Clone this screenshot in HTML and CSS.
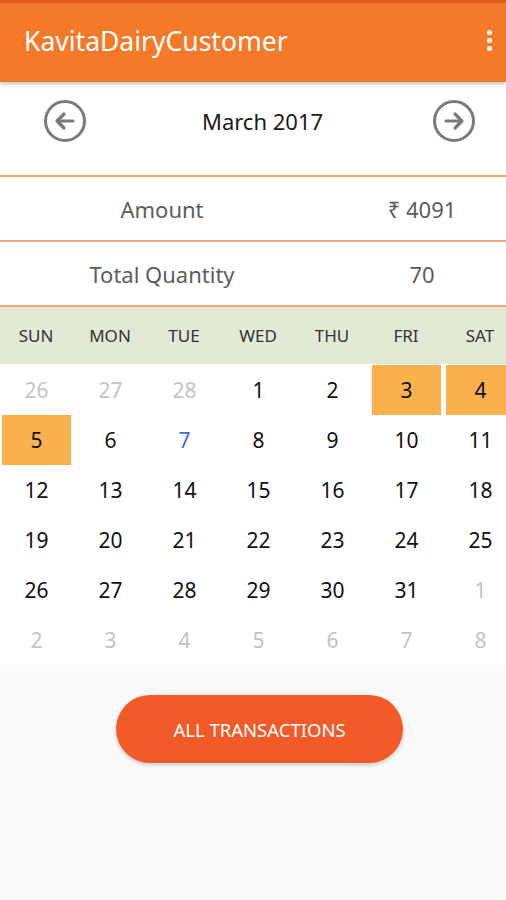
FILE: index.html
```html
<!DOCTYPE html>
<html>
<head>
<meta charset="utf-8">
<link rel="stylesheet" href="styles.css">
</head>
<body>
<div class="screen">
  <div class="status"></div>
  <header class="appbar">
    <div class="apptitle">KavitaDairyCustomer</div>
    <div class="menu"><span></span><span></span><span></span></div>
  </header>
  <div class="monthnav">
    <svg class="navbtn" width="46" height="46" viewBox="0 0 46 46"><circle cx="23" cy="23" r="19.5" fill="none" stroke="#7a7a7a" stroke-width="3"/><path d="M31 23H15M22 16l-7 7 7 7" fill="none" stroke="#7a7a7a" stroke-width="3.2" stroke-linecap="round" stroke-linejoin="round"/></svg>
    <div class="month">March 2017</div>
    <svg class="navbtn" width="46" height="46" viewBox="0 0 46 46"><circle cx="23" cy="23" r="19.5" fill="none" stroke="#7a7a7a" stroke-width="3"/><path d="M15 23h16M24 16l7 7-7 7" fill="none" stroke="#7a7a7a" stroke-width="3.2" stroke-linecap="round" stroke-linejoin="round"/></svg>
  </div>
  <div class="summary">
    <div class="srow"><div class="slabel">Amount</div><div class="svalue">₹ 4091</div></div>
    <div class="srow"><div class="slabel">Total Quantity</div><div class="svalue">70</div></div>
  </div>
  <div class="calendar">
    <div class="weekdays">
      <div>SUN</div><div>MON</div><div>TUE</div><div>WED</div><div>THU</div><div>FRI</div><div>SAT</div>
    </div>
    <div class="days">
      <div class="d other">26</div><div class="d other">27</div><div class="d other">28</div><div class="d">1</div><div class="d">2</div><div class="d hl">3</div><div class="d hl">4</div>
      <div class="d hl">5</div><div class="d">6</div><div class="d today">7</div><div class="d">8</div><div class="d">9</div><div class="d">10</div><div class="d">11</div>
      <div class="d">12</div><div class="d">13</div><div class="d">14</div><div class="d">15</div><div class="d">16</div><div class="d">17</div><div class="d">18</div>
      <div class="d">19</div><div class="d">20</div><div class="d">21</div><div class="d">22</div><div class="d">23</div><div class="d">24</div><div class="d">25</div>
      <div class="d">26</div><div class="d">27</div><div class="d">28</div><div class="d">29</div><div class="d">30</div><div class="d">31</div><div class="d other">1</div>
      <div class="d other">2</div><div class="d other">3</div><div class="d other">4</div><div class="d other">5</div><div class="d other">6</div><div class="d other">7</div><div class="d other">8</div>
    </div>
  </div>
  <div class="bottom">
    <button class="allbtn">ALL TRANSACTIONS</button>
  </div>
</div>
</body>
</html>
```
FILE: styles.css
```css
* {
  box-sizing: border-box;
}
html, body {
  margin: 0;
  padding: 0;
  background: #fafafa;
}
body {
  font-family: "Noto Sans", "DejaVu Sans", sans-serif;
  overflow: hidden;
}
.screen {
  width: 506px;
  height: 900px;
  overflow: hidden;
  display: flex;
  flex-direction: column;
  background: #fafafa;
}
.status {
  height: 3px;
  flex-shrink: 0;
  background: #ea5a22;
}
.appbar {
  height: 79px;
  flex-shrink: 0;
  background: #f47a2a;
  display: flex;
  align-items: center;
  justify-content: space-between;
  padding: 0 14px 0 24px;
  box-shadow: 0 2px 4px rgba(0,0,0,0.25);
  position: relative;
  z-index: 2;
}
.apptitle {
  color: #fff;
  font-size: 26.5px;
  margin-top: -4px;
}
.menu {
  display: flex;
  flex-direction: column;
  gap: 3px;
  margin-top: -4px;
}
.menu span {
  width: 5px;
  height: 5px;
  border-radius: 50%;
  background: #fff;
}
.monthnav {
  height: 93px;
  flex-shrink: 0;
  background: #fff;
  display: flex;
  align-items: center;
  justify-content: space-between;
  padding: 0 29px 15px 42px;
}
.navbtn {
  display: block;
}
.month {
  font-size: 22px;
  color: #1a1a1a;
  margin-left: 6px;
}
.summary {
  background: #fff;
  border-top: 2px solid #f6a47c;
  flex-shrink: 0;
}
.srow {
  height: 65px;
  display: flex;
  align-items: center;
  border-bottom: 2px solid #f6a47c;
  color: #5c5c5c;
  font-size: 22px;
  overflow: hidden;
}
.slabel {
  width: 324px;
  flex-shrink: 0;
  text-align: center;
}
.svalue {
  width: 196px;
  flex-shrink: 0;
  text-align: center;
}
.calendar {
  width: 518px;
  flex-shrink: 0;
  margin-left: -1px;
  background: #fff;
}
.weekdays {
  display: grid;
  grid-template-columns: repeat(7, 74px);
  height: 57px;
  background: #e2e9d5;
  align-items: center;
  font-size: 17px;
  color: #333;
  text-align: center;
}
.days {
  display: grid;
  grid-template-columns: repeat(7, 74px);
  grid-auto-rows: 50px;
  padding-top: 1px;
}
.d {
  display: flex;
  align-items: center;
  justify-content: center;
  font-size: 21px;
  color: #111;
  margin: 0 2px 0 3px;
}
.d.other {
  color: #c4c4c4;
}
.d.today {
  color: #3b6fd1;
}
.d.hl {
  background: #fbb24c;
}
.bottom {
  flex: 1;
  background: #fafafa;
  display: flex;
  justify-content: center;
  padding-top: 30px;
  padding-left: 13px;
}
.allbtn {
  width: 287px;
  height: 68px;
  border: none;
  border-radius: 34px;
  background: #f25a28;
  color: #fff;
  font-family: "Noto Sans", "DejaVu Sans", sans-serif;
  font-size: 18.5px;
  box-shadow: 0 2px 4px rgba(0,0,0,0.2);
  padding: 0;
}
```
